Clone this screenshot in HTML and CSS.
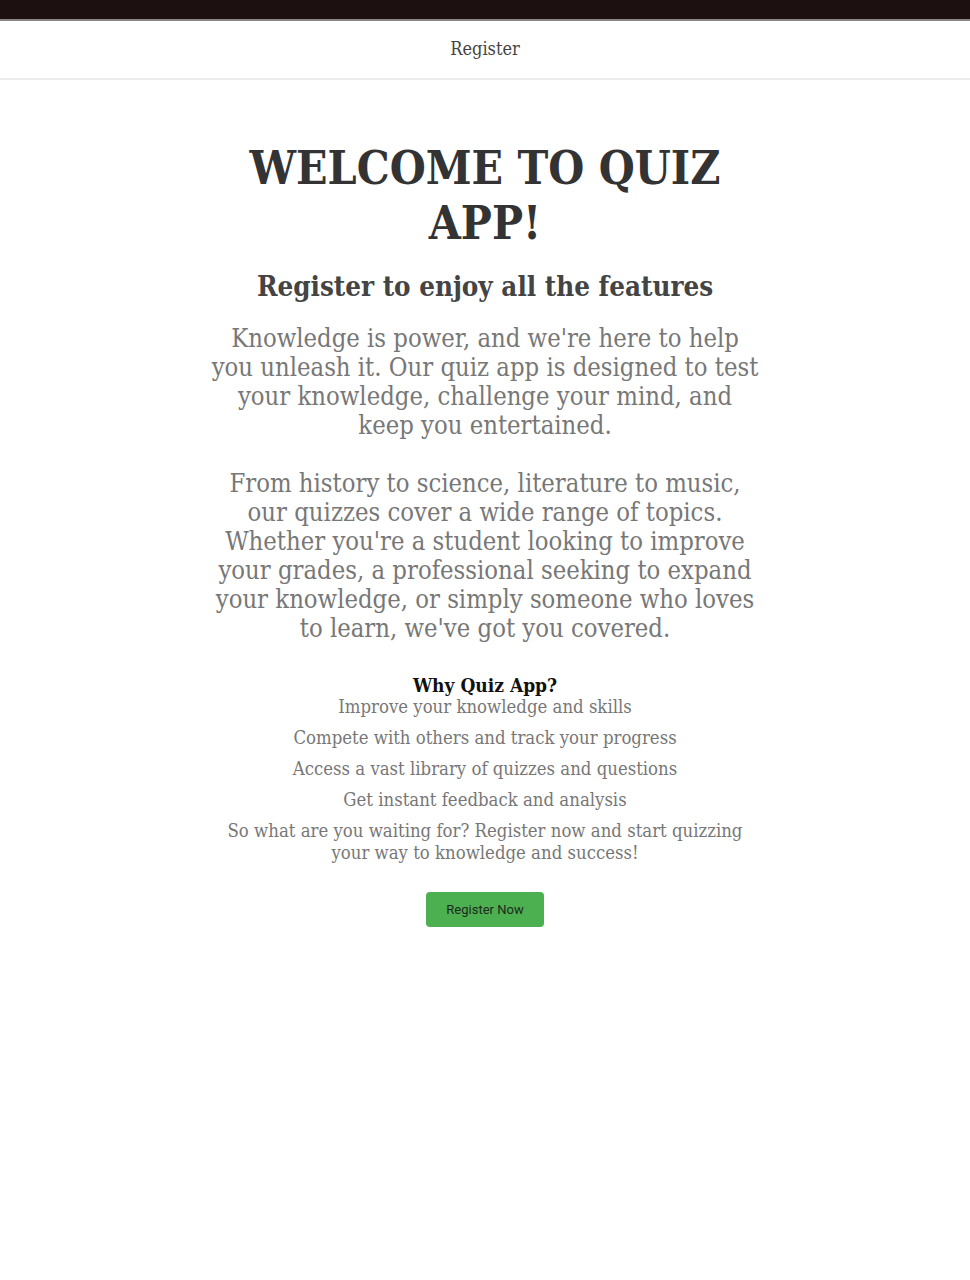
FILE: index.html
```html
<!DOCTYPE html>
<html lang="en">
<head>
<meta charset="utf-8">
<title>Quiz App</title>
<link rel="stylesheet" href="styles.css">
</head>
<body>
<div class="topbar"></div>
<header class="header">
  <a class="nav-link" href="#">Register</a>
</header>
<main class="main">
  <h1 class="title">WELCOME TO QUIZ APP!</h1>
  <h2 class="subtitle">Register to enjoy all the features</h2>
  <p class="lead">Knowledge is power, and we're here to help you unleash it. Our quiz app is designed to test your knowledge, challenge your mind, and keep you entertained.</p>
  <p class="lead">From history to science, literature to music, our quizzes cover a wide range of topics. Whether you're a student looking to improve your grades, a professional seeking to expand your knowledge, or simply someone who loves to learn, we've got you covered.</p>
  <h3 class="why">Why Quiz App?</h3>
  <ul class="features">
    <li>Improve your knowledge and skills</li>
    <li>Compete with others and track your progress</li>
    <li>Access a vast library of quizzes and questions</li>
    <li>Get instant feedback and analysis</li>
    <li>So what are you waiting for? Register now and start quizzing your way to knowledge and success!</li>
  </ul>
  <button class="cta" type="button">Register Now</button>
</main>
</body>
</html>
```
FILE: styles.css
```css
* { box-sizing: border-box; }
html, body { margin: 0; padding: 0; background: #fff; }
body {
  font-family: "DejaVu Serif", "Liberation Serif", serif;
  font-stretch: condensed;
  color: #333;
}

.topbar {
  height: 21px;
  background: #1c1110;
  border-bottom: 2px solid #8a8584;
}

.header {
  height: 59px;
  display: flex;
  align-items: center;
  justify-content: center;
  border-bottom: 2px solid #ececec;
  background: #fff;
}
.nav-link {
  font-size: 18px;
  color: #444;
  text-decoration: none;
  margin-top: -2px;
}

.main {
  width: 553px;
  margin: 0 auto;
  display: flex;
  flex-direction: column;
  align-items: center;
  text-align: center;
  padding-top: 61px;
}

.title {
  margin: 0;
  font-size: 46px;
  line-height: 55px;
  font-weight: bold;
  color: #333;
}
.subtitle {
  margin: 17px 0 0;
  font-size: 27.5px;
  line-height: 36px;
  font-weight: bold;
  color: #444;
}
.lead {
  margin: 20px 0 0;
  font-size: 25.4px;
  line-height: 29px;
  color: #777;
}
.lead + .lead { margin-top: 29px; }

.why {
  margin: 31px 0 0;
  font-size: 19px;
  line-height: 22px;
  font-weight: bold;
  color: #111;
}
.features {
  list-style: none;
  margin: 0;
  padding: 0;
  font-size: 18.4px;
  line-height: 22px;
  color: #777;
}
.features li { margin-bottom: 9px; }
.features li:last-child { margin-bottom: 0; }

.cta {
  margin-top: 28px;
  width: 118px;
  height: 35px;
  background: #4caf50;
  border: none;
  border-radius: 4px;
  font-family: Roboto, "Liberation Sans", sans-serif;
  font-stretch: normal;
  font-size: 13px;
  color: #1e2a1e;
}
```
